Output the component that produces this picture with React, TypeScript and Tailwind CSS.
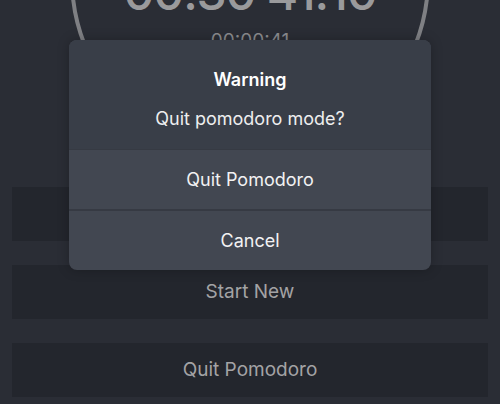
export default function App() {
  return (
    <div
      className="relative w-[500px] h-[404px] overflow-hidden bg-[#2a2d35] flex flex-col"
      style={{ fontFamily: 'Inter, "Noto Sans", sans-serif' }}
    >
      {/* Timer ring */}
      <div className="h-[187px] shrink-0 flex justify-center">
        <div className="mt-[-201px] w-[360px] h-[360px] shrink-0 rounded-full border-[4px] border-[#7f8084] flex flex-col items-center pt-[164px]">
          <div className="text-[48px] font-medium leading-[52px] text-[#9a9a9c] tracking-tight">
            00:30 41:10
          </div>
          <div className="mt-[12px] text-[19px] leading-none text-[#8a8b8e]">00:00:41</div>
        </div>
      </div>

      {/* Action buttons */}
      <div className="px-[12px] flex flex-col gap-[24px]">
        <div className="h-[54px] bg-[#23262d]" />
        <div className="h-[54px] bg-[#23262d] flex items-center justify-center text-[19px] text-[#a3a3a5]">
          Start New
        </div>
        <div className="h-[54px] bg-[#23262d] flex items-center justify-center text-[19px] text-[#a3a3a5]">
          Quit Pomodoro
        </div>
      </div>

      {/* Dialog */}
      <div className="absolute left-[69px] top-[40px] w-[362px] rounded-[8px] overflow-hidden bg-[#424751] shadow-[0_0_12px_rgba(0,0,0,0.25)]">
        <div className="h-[109px] bg-[#393e48] flex flex-col items-center pt-[27px] text-white">
          <div className="text-[18px] font-semibold leading-[26px]">Warning</div>
          <div className="text-[18px] leading-[26px] mt-[13px] text-[#eeeeef]">Quit pomodoro mode?</div>
        </div>
        <div className="h-[60px] border-t border-[#363a43] flex items-center justify-center text-[18px] text-[#f2f2f3]">
          Quit Pomodoro
        </div>
        <div className="h-[61px] border-t-2 border-[#363a43] flex items-center justify-center text-[18px] text-[#f2f2f3]">
          Cancel
        </div>
      </div>
    </div>
  );
}
